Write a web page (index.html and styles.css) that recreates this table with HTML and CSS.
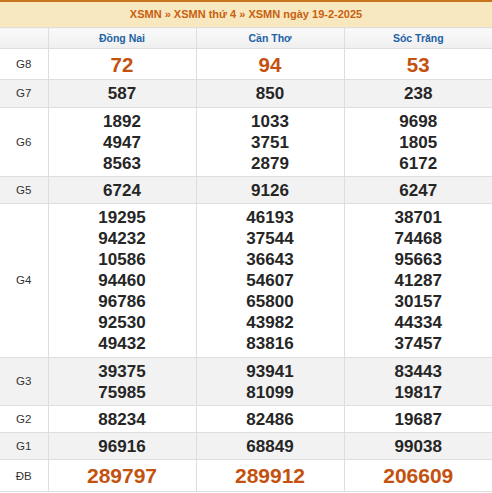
FILE: index.html
```html
<!DOCTYPE html>
<html lang="vi">
<head>
<meta charset="utf-8">
<title>XSMN</title>
<link rel="stylesheet" href="styles.css">
</head>
<body>
<table class="kq">
  <colgroup>
    <col class="c-label">
    <col class="c-prov">
    <col class="c-prov">
    <col class="c-prov">
  </colgroup>
  <tr class="title-row">
    <td colspan="4" class="title">XSMN » XSMN thứ 4 » XSMN ngày 19-2-2025</td>
  </tr>
  <tr class="head-row">
    <th></th>
    <th>Đồng Nai</th>
    <th>Cần Thơ</th>
    <th>Sóc Trăng</th>
  </tr>
  <tr class="big">
    <td class="lbl">G8</td>
    <td class="hl">72</td>
    <td class="hl">94</td>
    <td class="hl">53</td>
  </tr>
  <tr class="alt g7">
    <td class="lbl">G7</td>
    <td>587</td>
    <td>850</td>
    <td>238</td>
  </tr>
  <tr>
    <td class="lbl">G6</td>
    <td>1892<br>4947<br>8563</td>
    <td>1033<br>3751<br>2879</td>
    <td>9698<br>1805<br>6172</td>
  </tr>
  <tr class="alt">
    <td class="lbl">G5</td>
    <td>6724</td>
    <td>9126</td>
    <td>6247</td>
  </tr>
  <tr class="g4">
    <td class="lbl">G4</td>
    <td>19295<br>94232<br>10586<br>94460<br>96786<br>92530<br>49432</td>
    <td>46193<br>37544<br>36643<br>54607<br>65800<br>43982<br>83816</td>
    <td>38701<br>74468<br>95663<br>41287<br>30157<br>44334<br>37457</td>
  </tr>
  <tr class="alt">
    <td class="lbl">G3</td>
    <td>39375<br>75985</td>
    <td>93941<br>81099</td>
    <td>83443<br>19817</td>
  </tr>
  <tr>
    <td class="lbl">G2</td>
    <td>88234</td>
    <td>82486</td>
    <td>19687</td>
  </tr>
  <tr class="alt">
    <td class="lbl">G1</td>
    <td>96916</td>
    <td>68849</td>
    <td>99038</td>
  </tr>
  <tr class="db">
    <td class="lbl">ĐB</td>
    <td class="hl">289797</td>
    <td class="hl">289912</td>
    <td class="hl">206609</td>
  </tr>
</table>
</body>
</html>
```

FILE: styles.css
```css
html, body {
  margin: 0;
  padding: 0;
  background: #fff;
}

body {
  font-family: "Liberation Sans", Arial, sans-serif;
  color: #222;
}

.kq {
  width: 492px;
  border-collapse: collapse;
  table-layout: fixed;
}

.c-label { width: 48px; }
.c-prov { width: 148px; }

.kq td, .kq th {
  border: 1px solid #dedede;
  text-align: center;
  vertical-align: middle;
  padding: 0;
}

.kq tr > :first-child { border-left: none; }
.kq tr > :last-child { border-right: none; }

.kq td {
  font-size: 17px;
  font-weight: bold;
  line-height: 21px;
  padding: 2.5px 0;
  color: #262626;
}

.kq td.title {
  height: 25px;
  padding: 0;
  background: #f8e8bf;
  border-top: 2px solid #c8731e;
  color: #c8600f;
  font-weight: bold;
  font-size: 11px;
  line-height: 25px;
}

.kq .head-row th {
  height: 20px;
  background: linear-gradient(#fafafa, #efefef);
  color: #1d62a6;
  font-size: 10.5px;
  font-weight: bold;
  line-height: 20px;
}

.kq td.lbl {
  font-size: 11.5px;
  font-weight: normal;
  color: #333;
}

.alt td { background: #f2f2f2; }

.kq .g7 td { padding: 3px 0; }
.kq .g4 td { padding: 3px 0; }

.kq .big td { line-height: 25px; }
.kq .db td { line-height: 26px; }

.kq td.hl {
  color: #c4520f;
  font-size: 21px;
}

.kq .big td.hl { font-size: 20.5px; }
```
